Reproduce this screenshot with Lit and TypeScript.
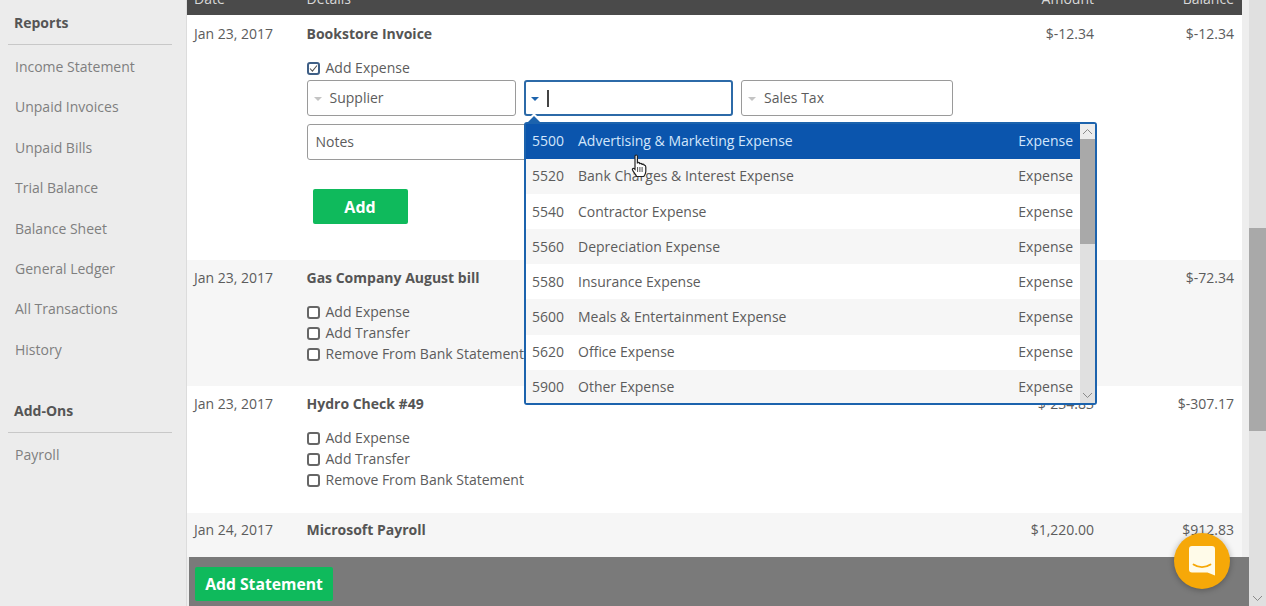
import { LitElement, html, css, svg } from "lit";
import { customElement } from "lit/decorators.js";

const accounts = [
  ["5500", "Advertising & Marketing Expense"],
  ["5520", "Bank Charges & Interest Expense"],
  ["5540", "Contractor Expense"],
  ["5560", "Depreciation Expense"],
  ["5580", "Insurance Expense"],
  ["5600", "Meals & Entertainment Expense"],
  ["5620", "Office Expense"],
  ["5900", "Other Expense"],
];

const chevUp = svg`<svg class="chev" width="11" height="7" viewBox="0 0 11 7"><path d="M1 6l4.5-4.5L10 6" fill="none" stroke="#8a8a8a" stroke-width="1"/></svg>`;
const chevDown = svg`<svg class="chev" width="11" height="7" viewBox="0 0 11 7"><path d="M1 1l4.5 4.5L10 1" fill="none" stroke="#8a8a8a" stroke-width="1"/></svg>`;

@customElement("app-root")
export class AppRoot extends LitElement {
  static styles = css`
    :host { display: block; width: 1266px; height: 606px; font-family: "Open Sans", sans-serif; font-size: 14px; color: #5c5c5c; }
    * { box-sizing: border-box; }
    .page { position: relative; display: flex; width: 1266px; height: 606px; overflow: hidden; background: #eeeeee; }

    .side { flex: 0 0 187px; background: #ececec; border-right: 1px solid #dcdcdc; padding: 13px 14px 0 8px; color: #7f7f7f; }
    .side h3 { margin: 0; padding-left: 6px; font-size: 14px; line-height: 20px; font-weight: 700; color: #555; }
    .side hr { margin: 11px 0 2px; border: 0; border-top: 1px solid #c8c8c8; }
    .side a { display: block; padding-left: 7px; height: 40.4px; line-height: 39.3px; white-space: nowrap; }
    .side .addons { margin-top: 31px; }

    .main { flex: 0 0 1062px; display: flex; flex-direction: column; min-width: 0; }
    .table { width: 1055px; flex: 1; min-height: 0; display: flex; flex-direction: column; }
    .grid { display: grid; grid-template-columns: 112.5px 1fr 100px 140px; padding: 0 8px 0 7px; }
    .head { height: 15px; background: #4a4a4a; color: #d8d8d8; align-content: end; padding-bottom: 6px; overflow: hidden; }
    .head span { line-height: 20px; }
    .right { text-align: right; }
    .row { background: #fff; line-height: 20px; }
    .row.alt { background: #f6f6f6; }
    .r1 { padding-top: 9px; padding-bottom: 36px; }
    .r2 { padding-top: 8px; padding-bottom: 21px; }
    .r3 { padding-top: 8px; padding-bottom: 22px; }
    .r3 .checks { margin-top: 14px; }
    .r4 { padding-top: 7px; padding-bottom: 17px; }
    .title { font-weight: 700; color: #555; }
    .checks { margin-top: 13.5px; }
    .check { display: flex; align-items: center; gap: 6px; height: 21px; white-space: nowrap; }
    .box { flex: none; width: 13px; height: 13px; border: 2px solid #666; border-radius: 3px; background: #fff; display: flex; align-items: center; justify-content: center; }
    .box.on { border-color: #3f5f86; }
    .fields { margin-top: 1.5px; display: grid; grid-template-columns: 209.5px 209px 212px; gap: 8px; width: 646px; }
    .input { position: relative; height: 36px; border: 1px solid #9a9a9a; border-radius: 3px; background: #fff; display: flex; align-items: center; padding-left: 6px; gap: 8px; }
    .input.focus { border: 2px solid #2c6aa8; padding-left: 5px; gap: 7px; }
    .tri { flex: none; width: 0; height: 0; border-left: 4px solid transparent; border-right: 4px solid transparent; border-top: 4px solid #c4c4c4; margin-top: 2px; }
    .focus .tri { border-top-color: #1d64ad; }
    .caret { width: 2px; height: 17px; background: #444; margin-left: 1px; }
    .notes { grid-column: 1 / -1; padding-left: 8px; }
    .add { display: block; margin: 29px 0 0 6px; width: 95px; height: 35px; border: 0; border-radius: 2px; background: #0fba5c; color: #fff; font: 700 16px "Open Sans", sans-serif; }

    .drop { position: absolute; z-index: 3; top: calc(100% + 8px); left: -2px; width: 573px; height: 283px; border: 2px solid #1c63ad; border-radius: 3px; background: #fff; display: flex; }
    .notch { position: absolute; z-index: 4; top: 31px; left: -2px; }
    .list { position: relative; flex: 1; min-width: 0; overflow: hidden; }
    .opt { display: flex; align-items: center; height: 35.1px; padding: 0 7px 0.4px 6px; background: #fff; }
    .opt:nth-child(even) { background: #f6f6f6; }
    .opt.sel { background: #0b55ad; color: #d3e6fb; }
    .opt .code { width: 46px; flex: none; }
    .opt .name { flex: 1; }
    .bar { flex: 0 0 15px; background: #e0e0e0; display: flex; flex-direction: column; align-items: center; }
    .bar .up { height: 15px; width: 100%; background: #ececec; display: flex; align-items: center; justify-content: center; }
    .bar .thumb { width: 100%; height: 105px; background: #a9a9a9; flex: none; }
    .bar .down { margin-top: auto; height: 15px; display: flex; align-items: center; justify-content: center; }

    .foot { flex: none; height: 49px; margin-left: 2px; background: #7a7a7a; padding: 10px 6px 5px; }
    .foot button { display: block; width: 138px; height: 34px; padding: 0; border: 0; border-radius: 2px; background: #0fba5c; color: #fff; font: 700 15.7px "Open Sans", sans-serif; white-space: nowrap; }

    .scroll { flex: 0 0 17px; background: #e0e0e0; display: flex; flex-direction: column; align-items: center; }
    .scroll .thumb { margin-top: 228px; width: 100%; height: 203px; background: #a9a9a9; }
    .scroll .down { margin-top: auto; height: 15px; display: flex; align-items: center; justify-content: center; }

    .hand { position: absolute; z-index: 6; left: 631px; top: 154px; }
    .chat { position: absolute; z-index: 5; left: 1174px; top: 533px; width: 56px; height: 56px; border-radius: 50%; background: #f6a808; box-shadow: 0 1px 6px rgba(0,0,0,.3); display: flex; align-items: center; justify-content: center; }
  `;

  private check(label: string) {
    return html`<div class="check"><span class="box"></span>${label}</div>`;
  }

  render() {
    return html`<div class="page">
      <nav class="side">
        <h3>Reports</h3>
        <hr />
        ${["Income Statement", "Unpaid Invoices", "Unpaid Bills", "Trial Balance", "Balance Sheet", "General Ledger", "All Transactions", "History"].map((t) => html`<a>${t}</a>`)}
        <h3 class="addons">Add-Ons</h3>
        <hr />
        <a>Payroll</a>
      </nav>

      <div class="main">
        <div class="table">
          <div class="grid head"><span>Date</span><span>Details</span><span class="right">Amount</span><span class="right">Balance</span></div>

          <div class="grid row r1">
            <div>Jan 23, 2017</div>
            <div>
              <div class="title">Bookstore Invoice</div>
              <div class="checks">
                <div class="check"><span class="box on"><svg width="9" height="9" viewBox="0 0 9 9"><path d="M1 4.5l2.4 2.6L8 1.5" fill="none" stroke="#555" stroke-width="1.1"/></svg></span>Add Expense</div>
              </div>
              <div class="fields">
                <div class="input"><span class="tri"></span>Supplier</div>
                <div class="input focus">
                  <span class="tri"></span><span class="caret"></span>
                  <svg class="notch" width="20" height="9" viewBox="0 0 20 9"><path d="M1 9l9-9 9 9z" fill="#fff"/><path d="M4 9l6-6 6 6z" fill="#1c63ad"/></svg>
                  <div class="drop">
                    <div class="list">
                      ${accounts.map((a, i) => html`<div class="opt ${i === 0 ? "sel" : ""}"><span class="code">${a[0]}</span><span class="name">${a[1]}</span><span>Expense</span></div>`)}
                    </div>
                    <div class="bar">
                      <div class="up">${chevUp}</div>
                      <div class="thumb"></div>
                      <div class="down">${chevDown}</div>
                    </div>
                  </div>
                </div>
                <div class="input"><span class="tri"></span>Sales Tax</div>
                <div class="input notes">Notes</div>
              </div>
              <button class="add">Add</button>
            </div>
            <div class="right">$-12.34</div>
            <div class="right">$-12.34</div>
          </div>

          <div class="grid row alt r2">
            <div>Jan 23, 2017</div>
            <div>
              <div class="title">Gas Company August bill</div>
              <div class="checks">${this.check("Add Expense")}${this.check("Add Transfer")}${this.check("Remove From Bank Statement")}</div>
            </div>
            <div class="right"></div>
            <div class="right">$-72.34</div>
          </div>

          <div class="grid row r3">
            <div>Jan 23, 2017</div>
            <div>
              <div class="title">Hydro Check #49</div>
              <div class="checks">${this.check("Add Expense")}${this.check("Add Transfer")}${this.check("Remove From Bank Statement")}</div>
            </div>
            <div class="right">$-234.83</div>
            <div class="right">$-307.17</div>
          </div>

          <div class="grid row alt r4">
            <div>Jan 24, 2017</div>
            <div class="title">Microsoft Payroll</div>
            <div class="right">$1,220.00</div>
            <div class="right">$912.83</div>
          </div>
        </div>
        <div class="foot"><button>Add Statement</button></div>
      </div>

      <div class="scroll">
        <div class="thumb"></div>
        <div class="down">${chevDown}</div>
      </div>

      <svg class="hand" width="17" height="25" viewBox="0 0 17 25">
        <path d="M4 2.2c0-1.6 2.4-1.6 2.4 0v7.2c0-1.4 2.3-1.4 2.3 0v.8c0-1.3 2.3-1.3 2.3 0v.9c0-1.2 2.2-1.2 2.2 0 .6 0 1.6.5 1.6 2v4.4c0 1.8-1 3.5-2 5H5.6c-.9-2-2.6-3.7-4-6.2-.8-1.5.7-2.8 2.4-1V2.2z" fill="#fff" stroke="#222" stroke-width="1.2"/>
        <path d="M6.6 13v5M8.9 13v5M11.1 13v5" stroke="#222" stroke-width=".8" fill="none"/>
      </svg>

      <div class="chat">
        <svg width="28" height="32" viewBox="0 0 28 32">
          <path d="M4 1h20a3 3 0 0 1 3 3v26.5l-7.5-3H4a3 3 0 0 1-3-3V4a3 3 0 0 1 3-3z" fill="#fffbe9"/>
          <path d="M5.5 19.5c5 3.4 12 3.4 17 0" fill="none" stroke="#f6a808" stroke-width="1.8" stroke-linecap="round"/>
        </svg>
      </div>
    </div>`;
  }
}
